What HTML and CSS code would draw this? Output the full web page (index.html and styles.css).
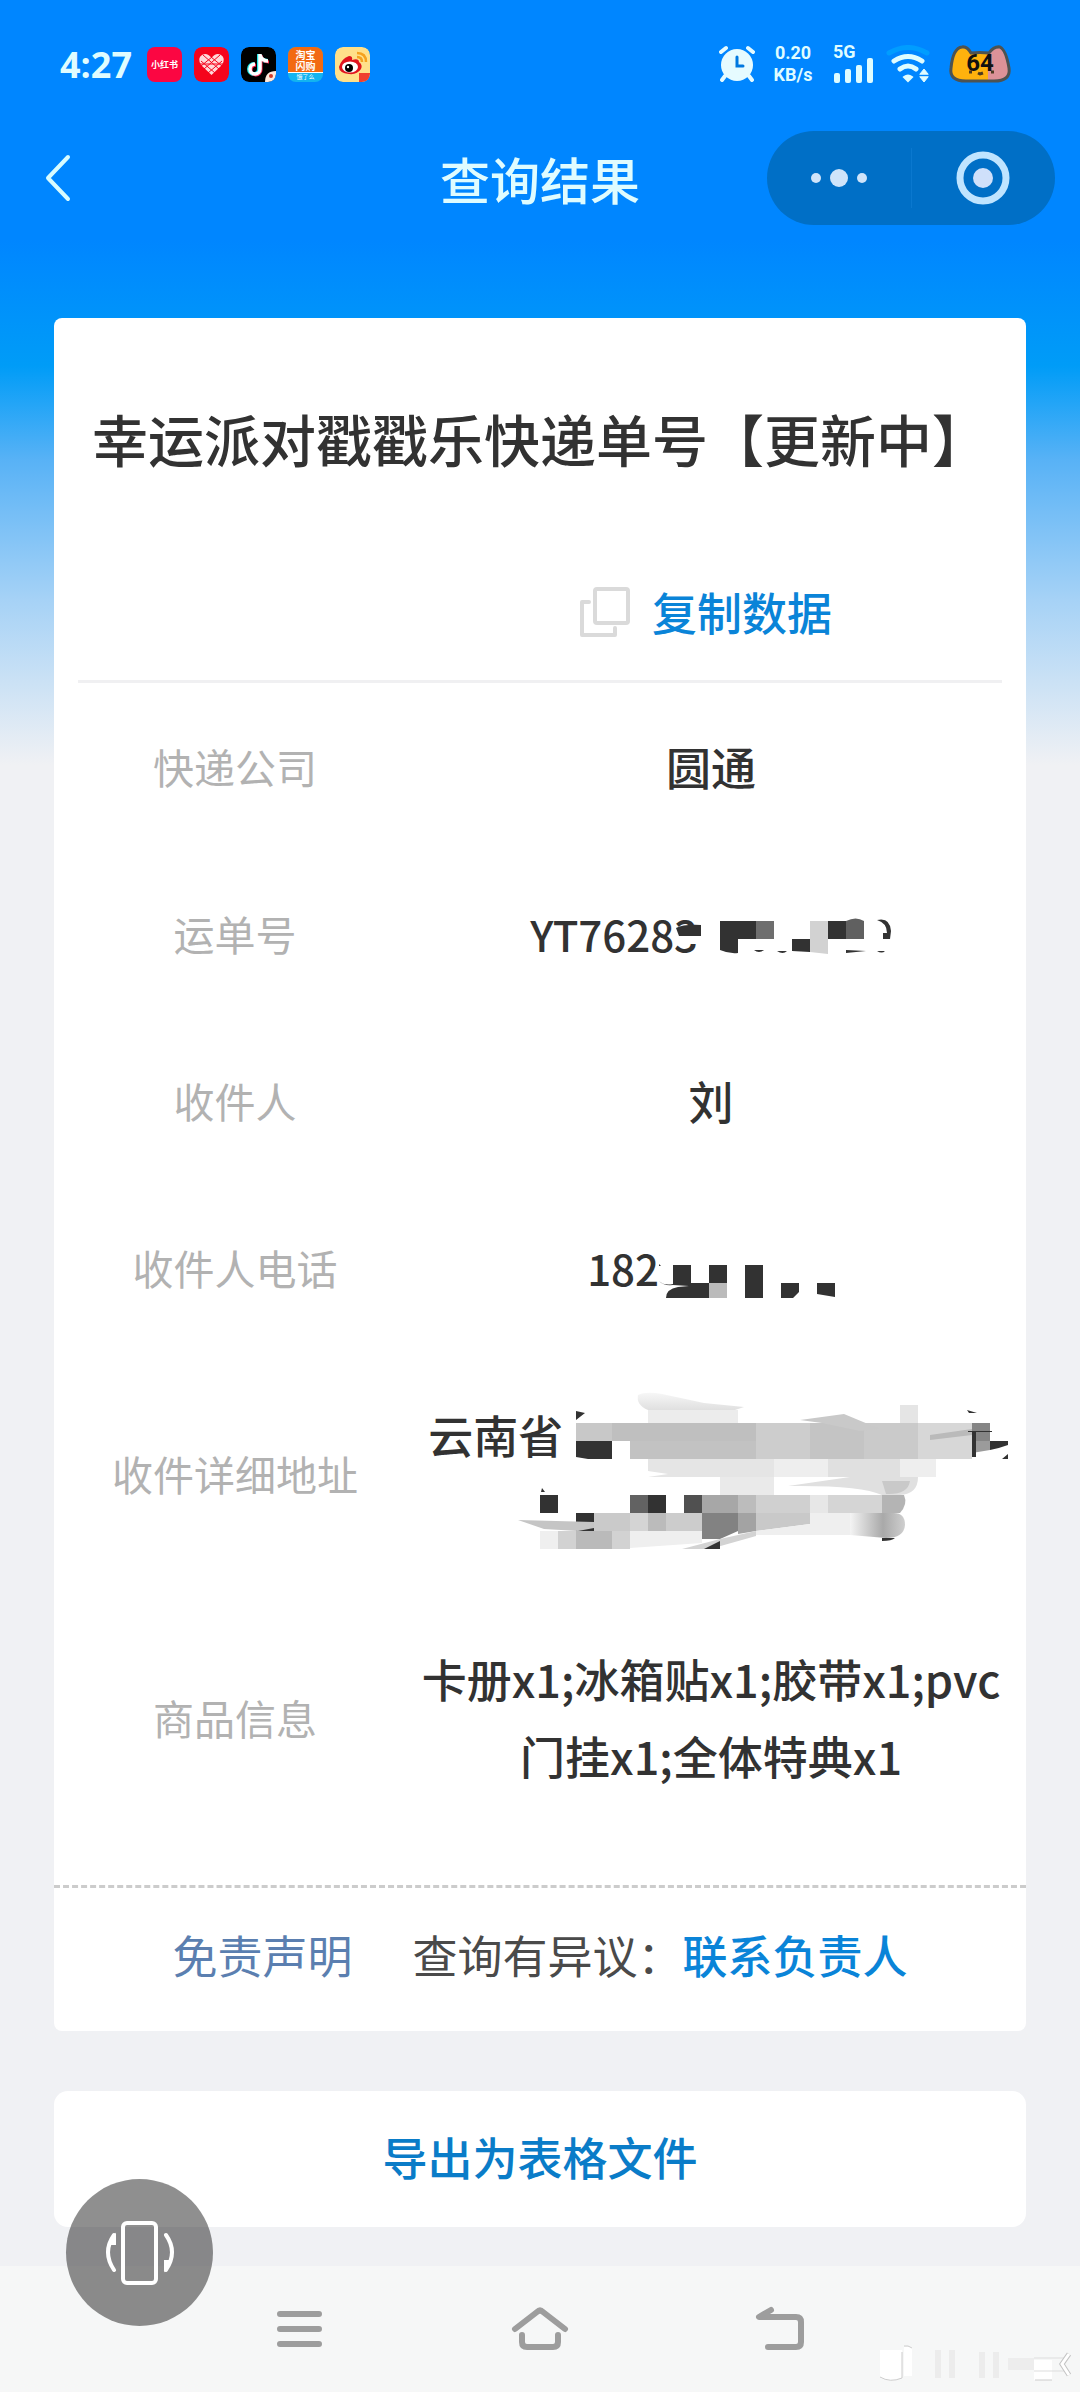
FILE: index.html
```
<!DOCTYPE html>
<html lang="zh-CN">
  <head>
    <meta charset="UTF-8">
    <meta name="viewport" content="width=device-width, initial-scale=1.0">
    <title>查询结果</title>
    <link rel="stylesheet" href="styles.css">
  </head>
  <body>
    <div class="status-bar">
      <div class="status-left">
        <span class="clock">4:27</span>
        <span class="app-icon app-red">小红书</span>
        <svg class="app-icon" viewBox="0 0 35 35">
          <rect width="35" height="35" rx="8" fill="#f5041c"/>
          <path d="M17.500 28 L7 18 Q3 11 8 8 Q13 5 17.500 11 Q22 5 27 8 Q32 11 28 18 Z" fill="#ffd9d9"/>
          <path d="M7 14 L21 26 M9 8 L25 22 M17 10 L28 19 M28 14 L14 26 M26 8 L10 22 M18 10 L7 19 M6 17 H29" stroke="#f5041c" stroke-width="1" fill="none"/>
        </svg>
        <svg class="app-icon" viewBox="0 0 35 35">
          <rect width="35" height="35" rx="8" fill="#000"/>
          <path d="M18 7 V22 A5 5 0 1 1 13 17 M18 8 Q20 14 27 14" stroke="#25e5e5" stroke-width="4" fill="none"/>
          <path d="M20 8 V23 A5 5 0 1 1 15 18 M20 9 Q22 15 28 15" stroke="#fe2c55" stroke-width="3" fill="none"/>
          <path d="M19 7 V22 A5 5 0 1 1 14 17 M19 8 Q21 14 27 14" stroke="#fff" stroke-width="3.500" fill="none"/>
          <path d="M35 24 V27 Q35 35 27 35 H24 Q24 24 35 24" fill="#ffe9dd"/>
          <circle cx="30" cy="29" r="2" fill="#d33a2a"/>
        </svg>
        <span class="app-icon app-shop"><b>淘宝<br>闪购</b><i>饿了么</i></span>
        <svg class="app-icon" viewBox="0 0 35 35">
          <rect width="35" height="35" rx="8" fill="#ffe08a"/>
          <path d="M22 6 Q31 6 31 15 M22 10 Q27 10 27 15" stroke="#f5a21f" stroke-width="2.500" fill="none"/>
          <path d="M4 20 Q6 12 14 9 Q18 9 17 13 Q24 11 24 15 Q28 18 26 22 Q22 28 14 27 Q4 26 4 20" fill="#e0141e"/>
          <ellipse cx="15" cy="20" rx="8" ry="5.500" fill="#fff"/>
          <circle cx="14" cy="21" r="4" fill="#000"/>
          <circle cx="13" cy="20" r="1.200" fill="#fff"/>
          <path d="M24 26 H35 V27 Q35 35 27 35 H24 Z" fill="#f0402e"/>
        </svg>
      </div>
      <div class="status-right">
        <svg class="alarm" viewBox="0 0 36 38" fill="none" stroke="#e6fbff" stroke-linecap="round">
          <path d="M2 7 L7 3 M34 7 L29 3 M6 31 L3 35 M30 31 L33 35" stroke-width="4"/>
          <circle cx="18" cy="20" r="16" fill="#e6fbff" stroke="none"/>
          <path d="M18 12 V21 H24" stroke="#0078e0" stroke-width="3"/>
        </svg>
        <div class="net-speed"><span>0.20</span><span>KB/s</span></div>
        <div class="mobile">
          <span>5G</span>
          <svg viewBox="0 0 42 26" fill="#dffcff">
            <rect x="1" y="15" width="6" height="10" rx="2"/>
            <rect x="12" y="11" width="6" height="14" rx="2"/>
            <rect x="23" y="7" width="6" height="18" rx="2"/>
            <rect x="34" y="0" width="6" height="25" rx="2"/>
          </svg>
        </div>
        <svg class="wifi" viewBox="0 0 44 38" fill="none" stroke="#dffcff" stroke-width="5" stroke-linecap="round">
          <path d="M3 8 Q22 -3 41 8" stroke="#009dff"/>
          <path d="M8 16 Q22 7 36 16"/>
          <path d="M14 24 Q22 18 30 24"/>
          <path d="M18 32 Q22 29 26 32 L22 36 Z" fill="#dffcff" stroke-width="2"/>
          <path d="M34 29 L38 24 L42 29 Z M34 32 L38 37 L42 32 Z" fill="#dffcff" stroke-width="1"/>
        </svg>
        <div class="battery">
          <svg viewBox="0 0 64 42">
            <path d="M3 25 Q5 5 14 4 Q19 3 23 10 Q32 9 41 10 Q46 3 52 4 Q58 7 61 25 Q63 38 46 38 H18 Q1 38 3 25" fill="#ffb20d"/>
            <path d="M40 10 Q46 3 52 4 Q58 7 61 25 Q63 38 46 38 H40 Z" fill="#dc9298"/>
            <path d="M3 25 Q5 5 14 4 Q19 3 23 10 Q32 9 41 10 Q46 3 52 4 Q58 7 61 25 Q63 38 46 38 H18 Q1 38 3 25 Z" fill="none" stroke="#4d5352" stroke-width="3"/>
            <path d="M21 29 H24 M43 29 H46 M30 30 L32 31 L35 30" stroke="#4b3a20" stroke-width="3"/>
          </svg>
          <span>64</span>
        </div>
      </div>
    </div>

    <header class="header">
      <button class="back" aria-label="返回">
        <svg viewBox="0 0 26 48"><path d="M23 3 L3 24 L23 45" fill="none" stroke="#d8fcff" stroke-width="4" stroke-linecap="round" stroke-linejoin="round"/></svg>
      </button>
      <h1>查询结果</h1>
      <div class="capsule">
        <button aria-label="更多">
          <svg viewBox="0 0 60 60" fill="#cfe4fa"><circle cx="7" cy="30" r="5"/><circle cx="30" cy="30" r="9"/><circle cx="53" cy="30" r="5"/></svg>
        </button>
        <button aria-label="关闭">
          <svg viewBox="0 0 60 60"><circle cx="30" cy="30" r="23" fill="none" stroke="#bfe4ff" stroke-width="7"/><circle cx="30" cy="30" r="10" fill="#cfe0fa"/></svg>
        </button>
      </div>
    </header>

    <main>
      <section class="card">
        <h2>幸运派对戳戳乐快递单号【更新中】</h2>
        <div class="copy-row">
          <button class="copy">
            <svg viewBox="0 0 50 50" fill="none" stroke="#dadada" stroke-width="4" stroke-linejoin="round" stroke-linecap="round">
              <rect x="15" y="2" width="33" height="34" rx="2"/>
              <path d="M9 15 H2 V48 H35 V41"/>
            </svg>
            复制数据
          </button>
        </div>
        <table class="info">
          <tr>
            <th scope="row">快递公司</th>
            <td>圆通</td>
          </tr>
          <tr>
            <th scope="row">运单号</th>
            <td>
              <div class="code">
                YT76283
                <svg class="mask-number" viewBox="0 0 216 40" fill="#323232">
                  <path d="M0 14 Q8 10 25 11 V22 H3 Z"/>
                  <path d="M0 22 H26 V30 H0 Z" fill="#fff"/>
                  <path d="M44 7 H80 V25 H62 V39 Q53 40 44 36 Z"/>
                  <rect x="80" y="7" width="18" height="18" fill="#6e6e6e"/>
                  <path d="M78 36 Q83 40 88 36 Z M101 37 Q107 41 111 37 Z M116 25 H134 V38 L116 37 Z"/>
                  <path d="M134 7 H152 V40 L134 38 Z" fill="#d2d2d2"/>
                  <rect x="152" y="7" width="18" height="18"/>
                  <path d="M170 7 Q180 2 188 7 V25 H170 Z" fill="#606060"/>
                  <path d="M170 36 L190 37 L170 39 Z M201 37 Q206 40 209 37 Z"/>
                  <path d="M201 6 Q214 3 215 17 L214 25 H207 V19 H211 Q211 9 201 6"/>
                </svg>
              </div>
            </td>
          </tr>
          <tr>
            <th scope="row">收件人</th>
            <td>刘</td>
          </tr>
          <tr>
            <th scope="row">收件人电话</th>
            <td>
              <div class="code">
                182
                <svg class="mask-phone" viewBox="0 0 180 60" fill="#323232">
                  <path d="M4 26 L6 28 H4 Z M4 43 Q9 48 18 46 V45 H54 V60 H11 Q11 51 23 49 L34 48 L18 47 Q8 48 4 43 Z"/>
                  <rect x="18" y="27" width="18" height="19"/>
                  <rect x="54" y="27" width="18" height="18"/>
                  <rect x="54" y="45" width="18" height="15" fill="#bbb"/>
                  <rect x="90" y="27" width="18" height="33"/>
                  <path d="M126 45 H144 V54 L138 60 H126 Z M162 45 H180 V59 L162 56 Z"/>
                </svg>
              </div>
            </td>
          </tr>
          <tr>
            <th scope="row">收件详细地址</th>
            <td class="address">
              云南省<br>&nbsp;
              <svg class="mask-address" viewBox="0 0 582 244">
                <defs>
                  <linearGradient id="smear" x1="0" x2="1">
                    <stop offset="0" stop-color="#f4f4f4"/>
                    <stop offset="0.6" stop-color="#a9a9a9"/>
                    <stop offset="1" stop-color="#cfcfcf"/>
                  </linearGradient>
                  <linearGradient id="fade" x1="0" y1="1" x2="0" y2="0">
                    <stop offset="0" stop-color="#dedede"/>
                    <stop offset="1" stop-color="#f7f7f7"/>
                  </linearGradient>
                </defs>
                <path d="M228 59 Q216 54 218 44 Q226 40 242 43 L284 52 L324 56 L312 60 Z" fill="url(#fade)"/>
                <rect x="228" y="59" width="90" height="13" fill="#ececec"/>
                <rect x="480" y="54" width="18" height="18" fill="#e5e5e5"/>
                <rect x="156" y="72" width="54" height="18" fill="#c8c8c8"/>
                <rect x="192" y="72" width="144" height="18" fill="#bfbfbf"/>
                <rect x="210" y="90" width="144" height="18" fill="#c2c2c2"/>
                <rect x="336" y="72" width="54" height="36" fill="#cdcdcd"/>
                <rect x="390" y="72" width="54" height="36" fill="#c4c4c4"/>
                <rect x="444" y="72" width="54" height="36" fill="#cacaca"/>
                <rect x="498" y="72" width="54" height="36" fill="#d7d7d7"/>
                <path d="M380 69 L424 63 L460 78 L440 80 L402 72 Z" fill="#c9c9c9"/>
                <path d="M510 84 L552 78 V84 L510 89 Z" fill="#bababa"/>
                <path d="M228 108 H408 V126 H228 L248 123 L228 120 Z" fill="#e5e5e5"/>
                <rect x="354" y="108" width="54" height="18" fill="#eee"/>
                <rect x="408" y="108" width="72" height="18" fill="#e0e0e0"/>
                <rect x="480" y="108" width="36" height="18" fill="#eee"/>
                <rect x="300" y="126" width="54" height="18" fill="#eaeaea"/>
                <path d="M368 135 L430 126 H498 Q498 143 480 144 H462 Q440 134 368 135" fill="#e0e0e0"/>
                <path d="M462 130 H490 Q488 144 466 143 Z" fill="#c9c9c9"/>
                <path d="M156 60 L165 62 L156 69 Z M156 90 H192 V108 H168 L156 106 Z M547 59 L557 62 H549 Z" fill="#323232"/>
                <rect x="552" y="72" width="18" height="18" fill="#858585"/>
                <path d="M552 90 H570 V99 L552 102 Z" fill="#9b9b9b"/>
                <path d="M548 80 H572 V81 H556 V106 H552 V81 H548 Z M570 90 H588 V94 Q580 97 570 99 Z M582 108 L588 103 V108 Z" fill="#323232"/>
                <path d="M122 137 L125 141 H121 Z M120 144 H138 V162 H120 Z M228 144 H246 V162 H228 Z M156 162 H174 V180 H156 Z" fill="#323232"/>
                <rect x="210" y="144" width="18" height="18" fill="#626262"/>
                <rect x="264" y="144" width="18" height="18" fill="#505050"/>
                <rect x="282" y="144" width="36" height="18" fill="#a7a7a7"/>
                <rect x="318" y="144" width="18" height="18" fill="#bcbcbc"/>
                <rect x="336" y="144" width="54" height="18" fill="#d0d0d0"/>
                <rect x="390" y="144" width="18" height="18" fill="#e7e7e7"/>
                <rect x="408" y="144" width="54" height="18" fill="#d5d5d5"/>
                <path d="M462 144 H484 Q488 153 480 162 H462 Z" fill="#b4b4b4"/>
                <path d="M98 169 L174 171 V177 L158 180 L124 178 Z" fill="#c5c5c5"/>
                <rect x="174" y="162" width="36" height="18" fill="#cacaca"/>
                <rect x="210" y="162" width="18" height="18" fill="#d4d4d4"/>
                <rect x="228" y="162" width="18" height="18" fill="#bbb"/>
                <rect x="246" y="162" width="36" height="18" fill="#ccc"/>
                <path d="M282 162 H318 V180 L300 188 H282 Z" fill="#828282"/>
                <path d="M318 162 H336 V180 L318 183 Z" fill="#a3a3a3"/>
                <path d="M336 162 H390 V173 L336 180 Z" fill="#c9c9c9"/>
                <path d="M390 162 H440 V184 H336 V180 L390 173 Z" fill="#efefef"/>
                <path d="M430 162 H474 Q485 162 485 174 Q484 187 466 187 L430 184 Z" fill="url(#smear)"/>
                <path d="M120 180 H138 V198 H120 Z M210 180 H282 V192 L210 197 Z" fill="#efefef"/>
                <rect x="138" y="180" width="18" height="18" fill="#d2d2d2"/>
                <rect x="156" y="180" width="36" height="18" fill="#bababa"/>
                <rect x="192" y="180" width="18" height="18" fill="#d2d2d2"/>
                <path d="M262 198 L300 188 L336 180 V185 L290 198 Z" fill="#d3d3d3"/>
                <path d="M284 198 L300 190 V198 Z M462 187 H475 Q472 190 462 190 Z" fill="#323232"/>
              </svg>
            </td>
          </tr>
          <tr>
            <th scope="row">商品信息</th>
            <td>卡册x1;冰箱贴x1;胶带x1;pvc<br>门挂x1;全体特典x1</td>
          </tr>
        </table>
        <div class="card-footer">
          <a class="disclaimer" href="#">免责声明</a>
          <p>查询有异议：<a href="#">联系负责人</a></p>
        </div>
      </section>
      <button class="export">导出为表格文件</button>
    </main>

    <nav class="system-nav">
      <button aria-label="最近任务">
        <svg viewBox="0 0 60 60"><path d="M10 15 H49 M10 30 H49 M10 45 H49"/></svg>
      </button>
      <button aria-label="主屏幕">
        <svg viewBox="0 0 60 60"><path d="M5 30 L27 13 Q30 10 33 13 L55 30 M12 36 V43 Q12 48 17 48 H43 Q48 48 48 43 V36"/></svg>
      </button>
      <button aria-label="返回上一页">
        <svg viewBox="0 0 60 60"><path d="M21 11 L9 18 H46 Q51 18 51 23 V43 Q51 48 46 48 H18"/></svg>
      </button>
      <svg class="watermark" viewBox="0 0 220 62">
        <path d="M20 20 V48 Q30 53 42 48 V20 Z M44 17 H52 V46 H44 Z M174 30 H192 V50 H174 Z" fill="#fff"/>
        <path d="M20 47 Q30 53 42 48 V22 M44 16 Q48 15 52 18 M175 50 H192" fill="none" stroke="#ccc" stroke-width="1"/>
        <path d="M78 20 V48 M92 20 V48 M122 22 V48 M136 22 V48" stroke="#ececec" stroke-width="6"/>
        <path d="M148 28 H174 V40 H148 Z" fill="#ededed"/>
        <path d="M174 28 H204 M174 41 H204" stroke="#ddd" stroke-width="1"/>
        <path d="M209 24 L202 34 L209 45" fill="none" stroke="#c4c4c4" stroke-width="5"/>
        <path d="M209 24 L202 34 L209 45" fill="none" stroke="#fff" stroke-width="3"/>
      </svg>
    </nav>

    <button class="rotate" aria-label="旋转屏幕">
      <svg viewBox="0 0 70 66" fill="none" stroke="#fff" stroke-width="4" stroke-linecap="round">
        <rect x="18" y="3" width="33" height="60" rx="4"/>
        <path d="M9 15 Q-3 32 9 50 M61 15 Q73 32 61 50"/>
        <path d="M10 16 V24 H5 Z M60 49 V41 H65 Z" fill="#fff" stroke-width="2"/>
      </svg>
    </button>
  </body>
</html>
```
FILE: styles.css
```
* {
  box-sizing: border-box;
}
body {
  position: relative;
  display: flex;
  flex-direction: column;
  min-height: 100vh;
  margin: 0;
  color: #323232;
  background: #f0f1f4 linear-gradient(#0086ff 240px, #009cf7 366px, #58b2f6 460px, #a6d2f6 600px, #f0f1f4 765px) no-repeat;
  font-family: "Noto Sans CJK SC", sans-serif;
}
button {
  padding: 0;
  border: none;
  background: none;
  font-family: inherit;
  cursor: pointer;
}
svg {
  display: block;
}
a {
  color: #0a84d8;
  text-decoration: none;
}

/* Status bar */
.status-bar {
  display: flex;
  justify-content: space-between;
  align-items: center;
  height: 128px;
  padding: 0 68px 0 60px;
  color: #dffcff;
}
.status-left {
  display: flex;
  align-items: center;
  gap: 12px;
}
.clock {
  margin-right: 3px;
  font-family: "Open Sans", sans-serif;
  font-size: 36px;
  font-weight: bold;
}
.app-icon {
  width: 35px;
  height: 35px;
  border-radius: 8px;
  overflow: hidden;
  color: #fff;
  text-align: center;
}
.app-red {
  background: #fb0642;
  font-size: 9px;
  font-weight: bold;
  line-height: 35px;
}
.app-shop {
  background: #12b4f0;
}
.app-shop b,
.app-shop i {
  display: block;
  font-style: normal;
}
.app-shop b {
  height: 26px;
  padding-top: 2px;
  border-bottom: 1px solid #fff;
  background: #f26a12;
  font-size: 10px;
  line-height: 11px;
}
.app-shop i {
  font-size: 6px;
  line-height: 8px;
}
.status-right {
  display: flex;
  align-items: center;
  font-family: Roboto, sans-serif;
}
.alarm {
  width: 36px;
  height: 38px;
}
.net-speed {
  display: flex;
  flex-direction: column;
  width: 56px;
  margin-left: 10px;
  font-size: 18px;
  font-weight: bold;
  line-height: 22px;
  text-align: center;
}
.mobile {
  width: 46px;
  height: 40px;
  margin-left: 12px;
  font-size: 18px;
  font-weight: bold;
  line-height: 16px;
}
.mobile span {
  display: block;
  height: 14px;
}
.mobile svg {
  width: 42px;
  height: 26px;
}
.wifi {
  width: 44px;
  height: 38px;
  margin-left: 7px;
}
.battery {
  position: relative;
  margin-left: 18px;
}
.battery svg {
  width: 64px;
  height: 42px;
}
.battery span {
  position: absolute;
  inset: 0;
  color: #111;
  font-size: 24px;
  font-weight: bold;
  line-height: 40px;
  text-align: center;
}

/* Page header */
.header {
  display: grid;
  grid-template-columns: 1fr auto 1fr;
  align-items: center;
  height: 100px;
  padding: 0 25px 0 45px;
}
.back svg {
  width: 26px;
  height: 48px;
}
.header h1 {
  margin: 0 0 0 -20px;
  color: #dffcff;
  font-size: 50px;
  font-weight: 500;
  line-height: 80px;
}
.capsule {
  display: flex;
  justify-self: end;
  align-items: center;
  width: 288px;
  height: 94px;
  border-radius: 47px;
  background: #006fc6;
}
.capsule button {
  display: flex;
  flex: 1;
  justify-content: center;
  align-items: center;
  height: 60px;
}
.capsule button + button {
  border-left: 1px solid #0a78cf;
}
.capsule svg {
  width: 60px;
  height: 60px;
}

/* Result card */
main {
  flex: 1;
  padding: 90px 54px 39px;
}
.card {
  border-radius: 8px;
  background: #fff;
}
.card h2 {
  margin: 0;
  padding-top: 80px;
  font-size: 56px;
  font-weight: 500;
  line-height: 80px;
  text-align: center;
  white-space: nowrap;
}
.copy-row {
  display: flex;
  justify-content: flex-end;
  margin: 0 24px;
  padding: 104px 170px 38px 0;
  border-bottom: 3px solid #f0f0f2;
}
.copy {
  display: flex;
  align-items: center;
  gap: 22px;
  color: #0a84d8;
  font-size: 45px;
  font-weight: 500;
  line-height: 60px;
}
.copy svg {
  width: 50px;
  height: 50px;
}
.info {
  width: calc(100% - 48px);
  margin: 0 24px;
  border-spacing: 0;
  font-size: 45px;
  font-weight: 500;
  line-height: 77px;
  text-align: center;
}
.info th {
  width: 34%;
  padding: 0;
  color: #b2b2b2;
  font-size: 41px;
  font-weight: normal;
}
.info td {
  padding: 45px 0 45px 28px;
  white-space: nowrap;
}
.code {
  display: flex;
  justify-content: center;
  align-items: center;
  font-size: 42px;
}
.mask-number {
  width: 216px;
  height: 40px;
  margin-left: -22px;
}
.mask-phone {
  width: 180px;
  height: 60px;
  margin-left: -4px;
}
.info .address {
  position: relative;
  padding-left: 36px;
  text-align: left;
}
.mask-address {
  position: absolute;
  top: 0;
  right: 0;
  width: 582px;
  height: 244px;
  overflow: visible;
}
.card-footer {
  display: flex;
  justify-content: center;
  gap: 60px;
  margin-top: 46px;
  padding: 37px 0 46px;
  border-top: 3px dashed #ccc;
  color: #4a4a4a;
  font-size: 45px;
  line-height: 60px;
}
.card-footer p {
  margin: 0;
}
.card-footer p a {
  font-weight: 500;
}
.card-footer .disclaimer {
  color: #5b7fb0;
}
.export {
  display: block;
  width: 100%;
  margin-top: 60px;
  padding: 36px 0 40px;
  border-radius: 14px;
  background: #fff;
  color: #0a7cc8;
  font-size: 45px;
  font-weight: 500;
  line-height: 60px;
}

/* System navigation */
.system-nav {
  position: relative;
  display: flex;
  justify-content: center;
  align-items: center;
  gap: 180px;
  height: 126px;
  background: #f6f7f7;
}
.system-nav button svg {
  width: 60px;
  height: 60px;
  fill: none;
  stroke: #9d9d9d;
  stroke-width: 6px;
  stroke-linecap: round;
  stroke-linejoin: round;
}
.watermark {
  position: absolute;
  right: 0;
  bottom: 0;
  width: 220px;
  height: 62px;
}

/* Floating rotate button */
.rotate {
  position: absolute;
  left: 66px;
  bottom: 66px;
  display: flex;
  justify-content: center;
  align-items: center;
  width: 147px;
  height: 147px;
  border-radius: 50%;
  background: rgba(0, 0, 0, 0.44);
}
.rotate svg {
  width: 70px;
  height: 66px;
}
```
